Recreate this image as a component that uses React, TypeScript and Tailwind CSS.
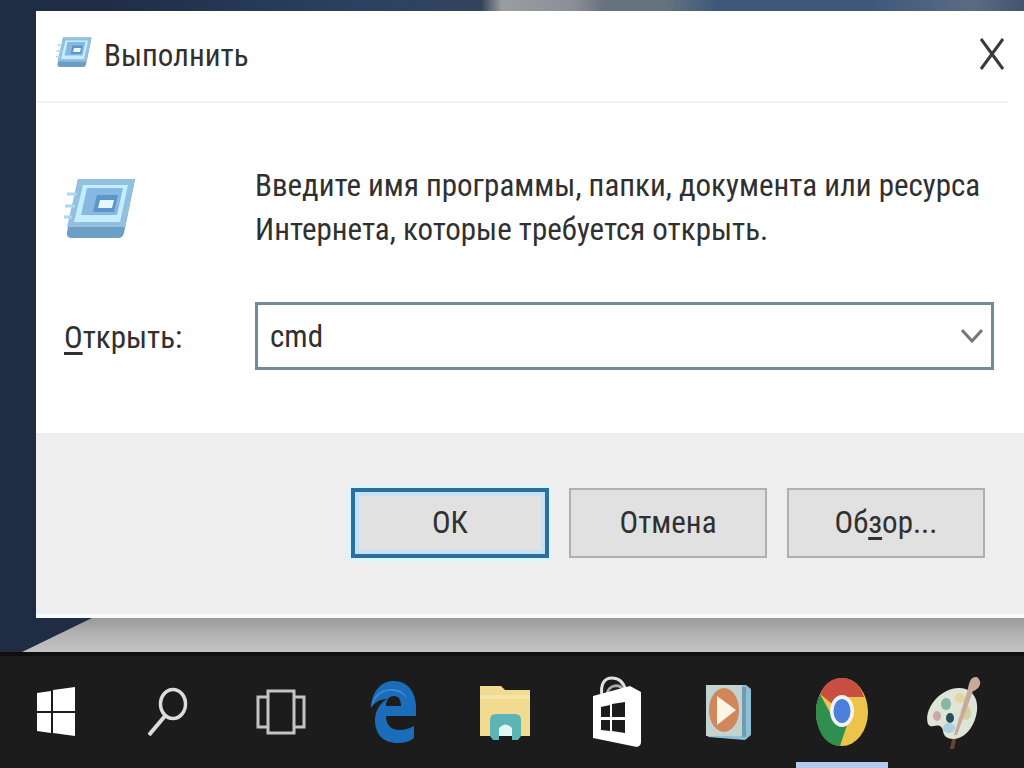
import React from "react";

interface DialogButtonProps {
    children: React.ReactNode;
    primary?: boolean;
}

interface TaskbarItemProps {
    label: string;
    active?: boolean;
    children: React.ReactNode;
}

const RunIcon: React.FC<{ className?: string }> = ({ className = "" }) => (
    <svg viewBox="0 0 72 64" className={className} aria-hidden="true">
        <path d="M14 3h57l-11 54q-1 5-6 5H8q-6 0-5-6z" fill="#6d9fc4" />
        <path d="M14 3h57l-10 48H3z" fill="#93c0df" />
        <path d="M19 9h45l-8 37H10z" fill="#c4eeff" />
        <path d="M23 12h36l-6 27H17z" fill="#86b9e2" />
        <path d="M33 19h21l-4 17H29z" fill="#5c95c8" />
        <path d="M36 24h14l-2 8H34z" fill="#e8f8ff" />
        <path d="M3 18h10M1 30h10M0 41h8" stroke="#a9d8f0" strokeWidth="3" />
    </svg>
);

const DialogButton: React.FC<DialogButtonProps> = ({ children, primary = false }) => (
    <button
        type="button"
        className={
            primary
                ? "h-[70px] flex-1 max-w-[198px] border-4 border-[#2c6f9f] bg-[#e1e1e1] shadow-[inset_0_0_0_4px_#c3e2f8,0_0_0_3px_#dcf5ff]"
                : "h-[70px] flex-1 max-w-[198px] border-2 border-[#b0b0b0] bg-[#e1e1e1]"
        }
    >
        {children}
    </button>
);

const TaskbarItem: React.FC<TaskbarItemProps> = ({ label, active = false, children }) => (
    <button type="button" aria-label={label} className="relative flex items-center justify-center">
        {children}
        {active && <span className="absolute bottom-0 h-[6px] w-[92px] bg-[#b4c9ee]"></span>}
    </button>
);

const WindowsIcon = () => (
    <svg viewBox="0 0 40 50" className="h-[50px] w-10" fill="#fff">
        <path d="M1 6l14-2v20H1zM17 3l22-3v24H17zM1 26h14v20L1 44zM17 26h22v23l-22-3z" />
    </svg>
);

const SearchIcon = () => (
    <svg viewBox="0 0 40 50" className="h-[50px] w-10" fill="none" stroke="#dcdcdc">
        <ellipse cx="25" cy="17" rx="12.5" ry="14.5" strokeWidth="3.5" />
        <path d="M17 29L1 48" strokeWidth="4" />
    </svg>
);

const TaskViewIcon = () => (
    <svg viewBox="0 0 50 46" className="h-[46px] w-[50px]" fill="none" stroke="#c4c4c4" strokeWidth="3">
        <path d="M12 2h26v42H12zM12 8H2v30h10M38 8h10v30H38" />
    </svg>
);

const EdgeIcon = () => (
    <svg viewBox="0 0 46 64" className="h-16 w-[46px]">
        <path
            d="M1 28C2 11 11 1 24 1c14 0 22 12 22 26v9H16c0 10 6 14 14 14 6 0 10-2 14-4v12c-5 4-10 5-16 5C13 63 5 54 5 40c0-9 5-17 12-21C9 19 4 23 1 28zm15-2h15c0-6-2-10-7-10s-8 4-8 10z"
            fill="#1b6dba"
        />
        <path d="M1 28C3 14 12 9 22 9c8 0 13 4 15 10-5-8-13-9-20-8C9 12 4 20 1 28z" fill="#3d8ed8" />
    </svg>
);

const FolderIcon = () => (
    <svg viewBox="0 0 50 58" className="h-[58px] w-[50px]">
        <path d="M0 3h21l4 4h25v46H0z" fill="#f1db90" />
        <path d="M0 12h50v4H0z" fill="#f6e5a8" />
        <path d="M10 53V37q0-6 6-6h19q6 0 6 6v16l-3 4h-6V45H19v12h-6z" fill="#5cb4b4" />
        <path d="M19 45q6-7 13 0v8H19z" fill="#dff5ef" />
    </svg>
);

const StoreIcon = () => (
    <svg viewBox="0 0 50 72" className="h-[72px] w-[50px]">
        <path d="M10 20C8 7 13 2 20 2s12 5 14 13" fill="none" stroke="#e2e2e2" strokeWidth="3" />
        <path d="M15 18c1-9 14-12 17-2" fill="none" stroke="#aaa" strokeWidth="3" />
        <path d="M1 20l37-10 11 6v50q0 4-4 5L1 62z" fill="#fff" />
        <path d="M9 31l9-2v12H9zM20 28l13-2v15H20zM9 44h9v11l-9-1zM20 44h13v13l-13-2z" fill="#1c1c1c" />
    </svg>
);

const MediaIcon = () => (
    <svg viewBox="0 0 46 58" className="h-[58px] w-[46px]">
        <path d="M2 2h38l5 4v46l-6 5-37-3z" fill="#8dbfd5" />
        <path d="M0 2h36v51H0z" fill="#c3d3d0" />
        <path d="M36 4h4v50h-4z" fill="#6f9cb3" />
        <ellipse cx="18" cy="27" rx="15" ry="22" fill="#d0875c" />
        <path d="M11 13v29l19-15z" fill="#fff5e4" />
    </svg>
);

const ChromeIcon = () => (
    <svg viewBox="0 0 52 70" className="h-[70px] w-[52px]">
        <ellipse cx="26" cy="35" rx="26" ry="34" fill="#ecc44c" />
        <path d="M26 35L4 17Q11 1 26 1q16 0 22 19H26z" fill="#c84f42" />
        <path d="M4 17l13 24 9 7 5 0-7 21C10 69 0 54 0 35q0-10 4-18z" fill="#2e8f4e" />
        <ellipse cx="26" cy="34" rx="12" ry="16" fill="#f1f3f4" />
        <ellipse cx="26" cy="34" rx="8.5" ry="12" fill="#4b80dc" />
    </svg>
);

const PaintIcon = () => (
    <svg viewBox="0 0 56 74" className="h-[74px] w-14">
        <path d="M24 74l3-14 4 0-3 14z" fill="#6b4430" />
        <path d="M34 13C48 14 54 26 50 41 46 57 34 67 22 63c-7-3-3-9-8-12-6-2-9 3-12-2C-3 35 14 12 34 13z" fill="#dfe4d8" />
        <ellipse cx="20" cy="29" rx="5" ry="6" fill="#86b5a4" />
        <ellipse cx="34" cy="23" rx="5" ry="5" fill="#e5d3a0" />
        <ellipse cx="11" cy="41" rx="4" ry="5" fill="#cfa6a6" />
        <ellipse cx="40" cy="38" rx="5" ry="7" fill="#d5cf9a" />
        <ellipse cx="23" cy="53" rx="6" ry="5" fill="#a8d0df" />
        <ellipse cx="24" cy="43" rx="4" ry="5" fill="#24505c" />
        <path d="M43 9q2-8 8-7 5 4 2 10-4 4-6 4L31 60h-3l13-43z" fill="#c9a99b" />
    </svg>
);

const taskbarItems = [
    { label: "Пуск", icon: <WindowsIcon /> },
    { label: "Поиск", icon: <SearchIcon /> },
    { label: "Представление задач", icon: <TaskViewIcon /> },
    { label: "Microsoft Edge", icon: <EdgeIcon /> },
    { label: "Проводник", icon: <FolderIcon /> },
    { label: "Магазин", icon: <StoreIcon /> },
    { label: "Проигрыватель", icon: <MediaIcon /> },
    { label: "Chrome", icon: <ChromeIcon />, active: true },
    { label: "Paint", icon: <PaintIcon /> },
];

export default function App() {
    return (
        <div className="flex min-h-screen flex-col bg-[#1d2b45] font-['Roboto_Condensed',Roboto,sans-serif] text-[31px] text-[#303030]">
            {/* Desktop wallpaper */}
            <div className="flex flex-1 flex-col bg-[#1f2c44]">
                <div className="h-[11px] bg-[linear-gradient(to_right,#1f2c46_10%,#2b4262_35%,#34435c_47%,#9a9da0_49%,#8d8f98_56%,#66727e_59%,#66727e_65%,#3f587a_70%,#3f587a_85%,#5b6b84_95%,#44546e)]"></div>

                {/* Run dialog */}
                <main className="ml-9 flex flex-1 flex-col bg-white">
                    <header className="mr-4 flex h-[92px] items-center border-b-2 border-[#f3f3f3] pl-5">
                        <RunIcon className="mb-2 h-[34px] w-9" />
                        <h1 className="ml-3 flex-1">Выполнить</h1>
                        <button type="button" aria-label="Закрыть" className="mb-1 p-1">
                            <svg viewBox="0 0 24 32" className="h-8 w-6" stroke="#3a3a3a" strokeWidth="3">
                                <path d="M1 1l22 30M23 1L1 31" />
                            </svg>
                        </button>
                    </header>

                    <div className="grid flex-1 grid-cols-[191px_1fr] content-start gap-y-[50px] pt-[61px] pr-[30px] pl-7">
                        <RunIcon className="mt-3 h-16 w-[72px]" />
                        <p className="leading-[44px]">
                            Введите имя программы, папки, документа или ресурса Интернета, которые требуется открыть.
                        </p>
                        <label htmlFor="command" className="self-center pt-1">
                            <u className="underline-offset-4">О</u>ткрыть:
                        </label>
                        <div className="flex h-[68px] items-center border-3 border-[#6f8c98] bg-white pr-2">
                            <input
                                id="command"
                                type="text"
                                defaultValue="cmd"
                                className="h-full min-w-0 flex-1 px-3 outline-none"
                            />
                            <button type="button" aria-label="Показать список">
                                <svg viewBox="0 0 22 14" className="h-[14px] w-[22px]" fill="none" stroke="#777" strokeWidth="3">
                                    <path d="M1 1l10 11L21 1" />
                                </svg>
                            </button>
                        </div>
                    </div>

                    <footer className="flex h-[185px] justify-end gap-5 border-b-4 border-[#f8faff] bg-[#eeeeee] pt-[55px] pr-[39px]">
                        <DialogButton primary>ОК</DialogButton>
                        <DialogButton>Отмена</DialogButton>
                        <DialogButton>
                            Об<u className="underline-offset-4">з</u>ор...
                        </DialogButton>
                    </footer>
                </main>

                {/* Slanted strip of the wallpaper under the dialog */}
                <div className="h-[34px] bg-linear-to-b from-[#9a9a9a] via-[#b4b4b4] to-[#c2c2c2] [clip-path:polygon(92px_0,100%_0,100%_100%,22px_100%)]"></div>
            </div>

            <nav className="grid h-[116px] grid-cols-9 border-t-4 border-[#0e0e0e] bg-[#1c1c1c] pr-[14px]">
                {taskbarItems.map((item) => (
                    <TaskbarItem key={item.label} label={item.label} active={item.active}>
                        {item.icon}
                    </TaskbarItem>
                ))}
            </nav>
        </div>
    );
}
